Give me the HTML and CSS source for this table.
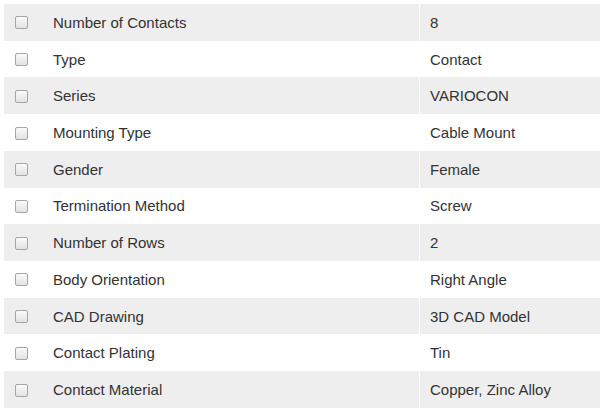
FILE: index.html
```html
<!DOCTYPE html>
<html>
<head>
<meta charset="utf-8">
<link rel="stylesheet" href="styles.css">
</head>
<body>
<table class="specs">
  <tbody>
    <tr><td class="chk"><span class="box"></span></td><td class="label">Number of Contacts</td><td class="value">8</td></tr>
    <tr><td class="chk"><span class="box"></span></td><td class="label">Type</td><td class="value">Contact</td></tr>
    <tr><td class="chk"><span class="box"></span></td><td class="label">Series</td><td class="value">VARIOCON</td></tr>
    <tr><td class="chk"><span class="box"></span></td><td class="label">Mounting Type</td><td class="value">Cable Mount</td></tr>
    <tr><td class="chk"><span class="box"></span></td><td class="label">Gender</td><td class="value">Female</td></tr>
    <tr><td class="chk"><span class="box"></span></td><td class="label">Termination Method</td><td class="value">Screw</td></tr>
    <tr><td class="chk"><span class="box"></span></td><td class="label">Number of Rows</td><td class="value">2</td></tr>
    <tr><td class="chk"><span class="box"></span></td><td class="label">Body Orientation</td><td class="value">Right Angle</td></tr>
    <tr><td class="chk"><span class="box"></span></td><td class="label">CAD Drawing</td><td class="value">3D CAD Model</td></tr>
    <tr><td class="chk"><span class="box"></span></td><td class="label">Contact Plating</td><td class="value">Tin</td></tr>
    <tr><td class="chk"><span class="box"></span></td><td class="label">Contact Material</td><td class="value">Copper, Zinc Alloy</td></tr>
  </tbody>
</table>
</body>
</html>
```
FILE: styles.css
```css
html, body {
  margin: 0;
  padding: 0;
  background: #ffffff;
}
body {
  padding: 4px 0 0 4px;
  font-family: "Liberation Sans", Arial, sans-serif;
  font-size: 15px;
  color: #333333;
}
.specs {
  border-collapse: collapse;
  width: 600px;
  table-layout: fixed;
}
.specs tr {
  height: 36.73px;
}
.specs tr:nth-child(odd) td {
  background: #eeeeee;
}
.specs td {
  padding: 0;
  vertical-align: middle;
  border-left: 1px solid #ffffff;
}
.specs td.chk {
  width: 34px;
  border-left: none;
  text-align: center;
}
.specs td.label {
  width: 366px;
  padding-left: 15px;
  border-left: none;
}
.specs td.value {
  padding-left: 10px;
}
.box {
  display: inline-block;
  width: 11px;
  height: 11px;
  border: 1px solid #a6a6a6;
  border-radius: 2px;
  background: linear-gradient(#fafafa, #e2e2e2);
  vertical-align: middle;
  margin-top: -2px;
}
```
